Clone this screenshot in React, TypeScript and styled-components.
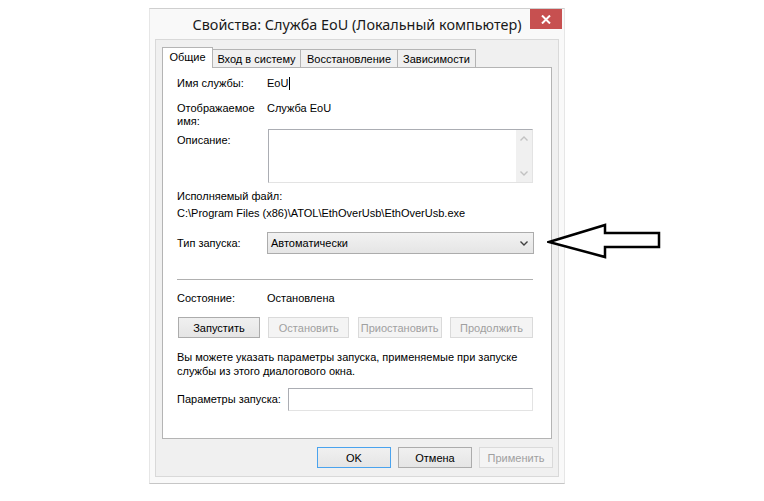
import React from 'react';
import styled, { createGlobalStyle, css } from 'styled-components';

const GlobalStyle = createGlobalStyle`
  html, body {
    margin: 0;
    padding: 0;
    background: #ffffff;
  }
  body {
    font-family: "Liberation Sans", Arial, sans-serif;
    font-size: 11px;
    color: #000000;
  }
`;

const Page = styled.div`
  position: relative;
  width: 764px;
  height: 501px;
  box-sizing: border-box;
  padding: 8px 0 0 149px;
`;

const Window = styled.div`
  width: 416px;
  height: 476px;
  box-sizing: border-box;
  display: flex;
  flex-direction: column;
  background: #f9f9f9;
  border: 1px solid #e6e6e6;
  border-top-color: #cfcfcf;
  border-bottom-color: #c6c6c6;
`;

const TitleBar = styled.div`
  height: 30px;
  display: grid;
  grid-template-columns: 1fr auto 1fr;
  align-items: start;
`;

const Title = styled.div`
  grid-column: 2;
  padding-top: 1px;
  font-family: "Noto Sans", "Open Sans", sans-serif;
  font-size: 14.4px;
  line-height: 30px;
  color: #1a1a1a;
  white-space: nowrap;
`;

const CloseButton = styled.div`
  grid-column: 3;
  justify-self: end;
  width: 32px;
  height: 20px;
  margin-right: 2px;
  background: #c75050;
  display: flex;
  align-items: center;
  justify-content: center;
`;

const Client = styled.div`
  flex: 1;
  margin: 0 5px 6px 5px;
  padding: 7px 6px 0 6px;
  background: #f0f0f0;
  border: 1px solid #d9d9d9;
  display: flex;
  flex-direction: column;
`;

const TabRow = styled.div`
  display: flex;
  align-items: flex-end;
  height: 20px;
`;

const Tab = styled.div<{ $active?: boolean; $w: number }>`
  width: ${p => p.$w}px;
  box-sizing: border-box;
  height: 18px;
  margin-left: -1px;
  border: 1px solid #b4b4b4;
  border-bottom: none;
  background: #f0f0f0;
  display: flex;
  align-items: center;
  justify-content: center;
  white-space: nowrap;
  &:first-child {
    margin-left: 0;
  }
  ${p => p.$active && css`
    height: 21px;
    margin-bottom: -1px;
    background: #ffffff;
    position: relative;
    z-index: 1;
    padding-bottom: 2px;
  `}
`;

const Panel = styled.div`
  height: 372px;
  box-sizing: border-box;
  background: #ffffff;
  border: 1px solid #b4b4b4;
  padding: 9px 18px 0 14px;
  display: flex;
  flex-direction: column;
`;

const FieldRow = styled.div<{ $mt?: number; $cols?: string; $center?: boolean }>`
  display: grid;
  grid-template-columns: ${p => p.$cols || '90px 1fr'};
  margin-top: ${p => p.$mt || 0}px;
  align-items: ${p => (p.$center ? 'center' : 'start')};
  line-height: 13px;
`;

const Text = styled.div<{ $mt?: number; $pt?: number; $lh?: number }>`
  margin-top: ${p => p.$mt || 0}px;
  padding-top: ${p => p.$pt || 0}px;
  line-height: ${p => p.$lh || 13}px;
  white-space: nowrap;
`;

const Caret = styled.span`
  display: inline-block;
  width: 1px;
  height: 13px;
  margin-left: 1px;
  background: #000000;
  vertical-align: top;
`;

const TextArea = styled.div`
  height: 54px;
  box-sizing: border-box;
  margin-left: 1px;
  border: 1px solid #abadb3;
  border-right-color: #e3e3e3;
  border-bottom-color: #e3e3e3;
  background: #ffffff;
  display: flex;
  justify-content: flex-end;
`;

const ScrollTrack = styled.div`
  width: 16px;
  background: #f0f0f0;
  display: flex;
  flex-direction: column;
  justify-content: space-between;
`;

const ScrollArrow = styled.div`
  height: 17px;
  display: flex;
  align-items: center;
  justify-content: center;
`;

const Select = styled.div`
  height: 22px;
  box-sizing: border-box;
  margin-right: -1px;
  border: 1px solid #acacac;
  background: linear-gradient(#f2f2f2, #e5e5e5);
  padding: 0 5px 0 3px;
  display: flex;
  align-items: center;
  justify-content: space-between;
`;

const Separator = styled.div`
  height: 1px;
  margin-top: 25px;
  background: #b0b0b0;
`;

const ButtonRow = styled.div`
  margin-top: 12px;
  padding-left: 1px;
  display: flex;
  justify-content: space-between;
`;

const Button = styled.div<{ $w: number; $disabled?: boolean; $default?: boolean }>`
  width: ${p => p.$w}px;
  height: 21px;
  box-sizing: border-box;
  border: 1px solid #acacac;
  background: linear-gradient(#f0f0f0, #e5e5e5);
  display: flex;
  align-items: center;
  justify-content: center;
  white-space: nowrap;
  ${p => p.$disabled && css`
    border-color: #dadada;
    background: #f4f4f4;
    color: #a0a0a0;
  `}
  ${p => p.$default && css`
    border-color: #4aa3ee;
  `}
`;

const Input = styled.div`
  height: 23px;
  box-sizing: border-box;
  border: 1px solid #abadb3;
  border-right-color: #e3e3e3;
  border-bottom-color: #e3e3e3;
  background: #ffffff;
`;

const Footer = styled.div`
  margin-top: 8px;
  margin-right: -1px;
  display: flex;
  justify-content: flex-end;
  gap: 7px;
`;

const Pointer = styled.svg`
  position: absolute;
  left: 547px;
  top: 223px;
`;

const Chevron = ({ up, color }: { up?: boolean; color: string }) => (
  <svg width="8" height="5" viewBox="0 0 8 5">
    <polyline
      points={up ? '0.5,4.5 4,1 7.5,4.5' : '0.5,0.5 4,4 7.5,0.5'}
      fill="none"
      stroke={color}
      strokeWidth="1.4"
    />
  </svg>
);

export default function App() {
  return (
    <>
      <GlobalStyle />
      <Page>
        <Window>
          <TitleBar>
            <Title>Свойства: Служба EoU (Локальный компьютер)</Title>
            <CloseButton>
              <svg width="10" height="9" viewBox="0 0 10 9">
                <path d="M1 0.5 L9 8.5 M9 0.5 L1 8.5" stroke="#ffffff" strokeWidth="2" />
              </svg>
            </CloseButton>
          </TitleBar>
          <Client>
            <TabRow>
              <Tab $active $w={51}>Общие</Tab>
              <Tab $w={89}>Вход в систему</Tab>
              <Tab $w={98}>Восстановление</Tab>
              <Tab $w={79}>Зависимости</Tab>
            </TabRow>
            <Panel>
              <FieldRow>
                <Text>Имя службы:</Text>
                <Text>EoU<Caret /></Text>
              </FieldRow>
              <FieldRow $mt={12}>
                <Text>Отображаемое<br />имя:</Text>
                <Text>Служба EoU</Text>
              </FieldRow>
              <FieldRow $mt={1}>
                <Text $pt={5}>Описание:</Text>
                <TextArea>
                  <ScrollTrack>
                    <ScrollArrow><Chevron up color="#c2c2c2" /></ScrollArrow>
                    <ScrollArrow><Chevron color="#c2c2c2" /></ScrollArrow>
                  </ScrollTrack>
                </TextArea>
              </FieldRow>
              <Text $mt={7}>Исполняемый файл:</Text>
              <Text $mt={4}>C:\Program Files (x86)\ATOL\EthOverUsb\EthOverUsb.exe</Text>
              <FieldRow $mt={12} $center>
                <Text>Тип запуска:</Text>
                <Select>
                  <span>Автоматически</span>
                  <Chevron color="#404040" />
                </Select>
              </FieldRow>
              <Separator />
              <FieldRow $mt={12}>
                <Text>Состояние:</Text>
                <Text>Остановлена</Text>
              </FieldRow>
              <ButtonRow>
                <Button $w={82}>Запустить</Button>
                <Button $w={81} $disabled>Остановить</Button>
                <Button $w={84} $disabled>Приостановить</Button>
                <Button $w={83} $disabled>Продолжить</Button>
              </ButtonRow>
              <Text $mt={12} $lh={14}>
                Вы можете указать параметры запуска, применяемые при запуске<br />
                службы из этого диалогового окна.
              </Text>
              <FieldRow $mt={10} $cols="111px 1fr" $center>
                <Text>Параметры запуска:</Text>
                <Input />
              </FieldRow>
            </Panel>
            <Footer>
              <Button $w={74} $default>OK</Button>
              <Button $w={74}>Отмена</Button>
              <Button $w={74} $disabled>Применить</Button>
            </Footer>
          </Client>
        </Window>
        <Pointer width="116" height="38" viewBox="0 0 116 38">
          <path
            d="M2 19 L58 2 L58 10 L112 10 L112 24 L58 24 L58 34 Z"
            fill="#ffffff"
            stroke="#000000"
            strokeWidth="2.5"
            strokeLinejoin="miter"
          />
        </Pointer>
      </Page>
    </>
  );
}
